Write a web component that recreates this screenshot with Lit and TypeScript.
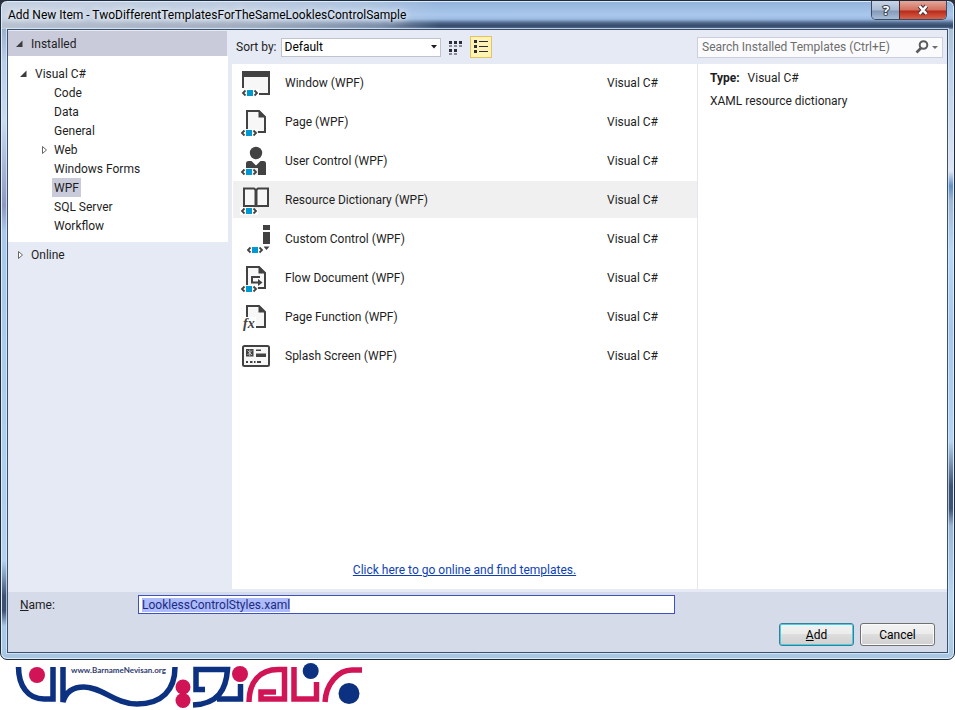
import { LitElement, html, css, svg } from "lit";
import { customElement, state, query } from "lit/decorators.js";
import { classMap } from "lit/directives/class-map.js";

const INK = "#424242";

const badge = (x: number, y: number) => svg`
  <rect x=${x - 1} y=${y - 1} width="18" height="8" fill="#fff" opacity=".9"/>
  <path d="M${x + 3.5} ${y + 0.5}L${x + 1} ${y + 3}l2.5 2.5M${x + 12.5} ${y + 0.5}l2.5 2.5l-2.5 2.5" fill="none" stroke=${INK} stroke-width="1.8"/>
  <rect x=${x + 5} y=${y} width="6" height="6" fill="#0098d0"/>`;

const page = svg`
  <path d="M7 6H19l6 6V27H7z" fill="#f7f7f7" stroke=${INK} stroke-width="2"/>
  <path d="M18.500 5L26 12.500H18.500z" fill=${INK}/>`;

const icons: Record<string, unknown> = {
  window: svg`
    <path d="M3 10H29V28.500H3z" fill="#f7f7f7"/>
    <path d="M2 5H30V29H19V27H28V11H4V22H2z" fill=${INK}/>${badge(2, 24)}`,
  page: svg`${page}${badge(1, 25)}`,
  user: svg`
    <circle cx="16" cy="9" r="6.200" fill=${INK}/>
    <path d="M6 31V19.500Q6 17 8.500 17H11.500L16 21.500L20.500 17H23.500Q26 17 26 19.500V31z" fill=${INK}/>
    ${badge(1, 25)}`,
  book: svg`
    <path d="M4 5.500H14L16 7L18 5.500H28V23H18L16 25L14 23H4z" fill="#f7f7f7" stroke=${INK} stroke-width="2"/>
    <path d="M14.500 6H17.500V24H14.500z" fill=${INK}/>${badge(1, 25)}`,
  custom: svg`
    <path d="M23 3H30V8H23zM23 10H30V22H23zM23.500 24.500H29.500L26.500 28z" fill=${INK}/>${badge(7, 25)}`,
  flow: svg`${page}
    <path d="M20 16H12V21.500H19" fill="none" stroke=${INK} stroke-width="2"/>
    <path d="M18 18L22.500 21.500L18 25z" fill=${INK}/>${badge(1, 25)}`,
  fx: svg`${page}
    <rect x="1" y="17" width="15" height="15" fill="#fff"/>
    <text class="fx" x="3" y="28" fill=${INK}>fx</text>`,
  splash: svg`
    <rect x="3" y="7" width="26" height="20" rx="1.500" fill="#f7f7f7" stroke=${INK} stroke-width="2"/>
    <path d="M6 10H13.500V17.500H6zM16 10.500H21V12H16zM16 14.500H26V18H16zM6 22H8V24H6zM10 22H12.500V24H10zM14 22H15.500V24H14zM17 22H21V24H17z" fill=${INK}/>
    <path d="M7.500 11.500L12 16M12 11.500L7.500 16M9.800 10.500V17" stroke="#ddd" stroke-width=".8"/>`,
};

const templates = [
  ["window", "Window (WPF)"],
  ["page", "Page (WPF)"],
  ["user", "User Control (WPF)"],
  ["book", "Resource Dictionary (WPF)"],
  ["custom", "Custom Control (WPF)"],
  ["flow", "Flow Document (WPF)"],
  ["fx", "Page Function (WPF)"],
  ["splash", "Splash Screen (WPF)"],
];

const categories = ["Code", "Data", "General", "Web", "Windows Forms", "WPF", "SQL Server", "Workflow"];

const opened = html`<svg class="arrow" viewBox="0 0 8 8" aria-hidden="true"><path d="M6.500 .5V7H0z" fill="#3c3c3c"/></svg>`;
const closed = html`<svg class="arrow" viewBox="0 0 8 8" aria-hidden="true"><path d="M2.500 .5V7.500L6.500 4z" fill="#fff" stroke="#666"/></svg>`;

@customElement("brand-logo")
class BrandLogo extends LitElement {
  static styles = css`
    :host { display: block; padding: 0 14px; background: #fff; }
    svg { display: block; width: 350px; height: 50px; }
    text { font: bold 8px Lato, sans-serif; fill: #303b70; }
    .line { fill: none; stroke-width: 5.500px; }
    .navy { stroke: #0b3180; }
    .red { stroke: #d01455; }
    .navy-dot { fill: #0b3180; }
    .red-dot { fill: #d01455; }
  `;
  render() {
    return html`<svg viewBox="14 660 350 50">
      <g class="line navy">
        <path d="M18.500 667C18.500 686 28 699 44 699H53V667"/>
        <path d="M63 667V702C66 691 74 687 84 687C102 687 115 704 137 704C162 704 175 690 175 667"/>
        <path d="M205 689.500H196V669.500H227.500C226 690 218 704 193 705"/>
        <path d="M217 699H240.500V684"/>
      </g>
      <g class="line red">
        <path d="M249 702C249 682 260 669.500 278 669.500H284.500V699H261V692H276"/>
        <path d="M294 667V699H316.500V682"/>
        <path d="M325 702C326 684 338 670 352 670H362"/>
      </g>
      <g class="red-dot">
        <circle cx="37" cy="675" r="8"/><circle cx="183" cy="687" r="7.500"/>
        <circle cx="183" cy="700.500" r="7.500"/><circle cx="240" cy="674" r="8"/>
      </g>
      <g class="navy-dot"><circle cx="310.700" cy="671" r="8"/><circle cx="349" cy="693.500" r="10.500"/></g>
      <text x="71" y="673">www.BarnameNevisan.org</text>
    </svg>`;
  }
}

@customElement("app-root")
class AppRoot extends LitElement {
  @state() category = "WPF";
  @state() template = "Resource Dictionary (WPF)";
  @query("#name") nameBox!: HTMLInputElement;

  static styles = css`
    :host {
      display: flex; flex-direction: column; min-height: 100vh;
      background: linear-gradient(#2b2f3c 0 20px, #fff 20px);
      font: 12px/16px Roboto, sans-serif; color: #1e1e1e;
    }
    * { box-sizing: border-box; }
    button, input, select { font: inherit; color: inherit; margin: 0; padding: 0; }
    svg { display: block; }
    ul { list-style: none; margin: 0; padding: 0; }
    .dialog {
      flex: 1; display: flex; flex-direction: column; padding: 0 6px 6px;
      border: 1px solid #1f2a3a; border-radius: 7px;
      box-shadow: inset 0 0 0 1px #dcecfb;
      background:
        linear-gradient(90deg, rgba(205, 213, 225, .85), rgba(205, 213, 225, .7) 240px, rgba(190, 205, 225, .5) 380px, transparent 440px) top / 100% 28px no-repeat,
        linear-gradient(#93b2da, #a9c7ec 14px, #9dbbe2 18px, #4c6486 22px, #33496a 25px, #52688a 27px, #8797ad 28px) top / 100% 28px no-repeat,
        linear-gradient(#7f96b5, #b9cfe8 60px, #c8dcf0 120px, #8f98c0 205px, #a9c8ea 230px, #b4d2ef 560px, #3e5274 595px, #3e5274 610px, #a9c8ea 625px, #a9c6e0) left / 50% 100% no-repeat,
        linear-gradient(#9fb1c4, #b9cfe8 60px, #e0e4f2 170px, #5f8fc4 185px, #a0b8d4 200px, #b8d8f8 250px, #a6c6ec 330px, #b4d4f4 440px, #3e5274 485px, #3e5274 508px, #9ab6d6 525px, #b8d8f4 600px, #a9c6e0);
    }
    .titlebar { display: flex; justify-content: space-between; height: 28px; }
    h1 { margin: 0; padding: 6px 1px; font: inherit; color: #000; text-shadow: 0 0 6px #fff, 0 0 10px #e8eef6; }
    .caption {
      display: flex; height: 19px; margin-right: 1px;
      border: 1px solid #3c4a60; border-top: 0; border-radius: 0 0 5px 5px;
    }
    .caption button { display: grid; place-items: center; border: 0; }
    .caption .help { width: 27px; border-radius: 0 0 0 4px; background: linear-gradient(#c8d5e6, #a9bbd2 9px, #8399b8 10px, #a8bdd6); }
    .caption .close { width: 47px; border-left: 1px solid #4a2a2a; border-radius: 0 0 4px 0; background: linear-gradient(#e5a79b, #d2705e 9px, #b9291a 10px, #d8624a); }
    .glyph { fill: #fff; stroke: #3c4452; stroke-width: 2px; paint-order: stroke; font: bold 13px/16px "Open Sans", sans-serif; }
    .content {
      flex: 1; display: flex; flex-direction: column;
      border: 1px solid #39506e; background: #e6eaf5;
      box-shadow: 0 0 0 1px rgba(225, 238, 250, .7);
    }
    .body { flex: 1; display: grid; grid-template: 34px 1fr / 224px 1fr 250px; padding-bottom: 3px; }
    .sidebar { grid-row: 1 / 3; padding: 1px 4px 0 0; }
    .group { display: flex; align-items: center; gap: 7px; padding: 0 8px; height: 25px; }
    .group.installed { background: #cacbda; margin-right: 1px; }
    .arrow { width: 8px; height: 8px; flex: none; }
    .tree { background: #fff; height: 186px; padding-top: 8px; }
    .tree li { display: flex; align-items: center; height: 19px; }
    .root { padding-left: 12px; gap: 7px; }
    .leaf { padding-left: 32px; gap: 2px; }
    .slot { width: 10px; flex: none; }
    .leaf button { border: 0; background: none; height: 19px; padding: 0 2px; }
    .leaf button.selected { background: #cacbda; }
    .tools { grid-column: 2 / 4; display: flex; align-items: center; padding: 0 4px; }
    .sort { position: relative; display: flex; align-items: center; gap: 4px; }
    .sort select {
      appearance: none; width: 160px; height: 19px; padding: 0 3px; border: 1px solid #c0c3cf;
      border-radius: 0; background: #fff; color: #000; outline: 0;
    }
    .sort .drop { position: absolute; right: 4px; pointer-events: none; }
    .view { width: 22px; height: 22px; display: grid; place-items: center; border: 1px solid transparent; background: none; }
    .view.small { margin-left: 4px; }
    .view.on { margin-left: 3px; border-color: #e5c365; background: #fff2b5; }
    .search {
      margin-left: auto; width: 246px; height: 21px; display: flex; align-items: center; gap: 3px;
      padding: 0 4px; border: 1px solid #cccedb; background: #fbfbfd;
    }
    .search input { flex: 1; min-width: 0; border: 0; background: none; outline: 0; }
    .search input::placeholder { color: #6d6d6d; opacity: 1; }
    .list { display: flex; flex-direction: column; background: #fff; justify-content: space-between; }
    .items { display: grid; gap: 2px; }
    .item { display: grid; grid-template-columns: 32px 1fr 90px; align-items: center; height: 37px; padding-left: 7px; margin-left: 1px; }
    .item.selected { background: #f0f0f0; }
    .item svg { width: 32px; height: 32px; margin-bottom: 1px; }
    .item .label { padding-left: 13px; }
    .fx { font: italic bold 14px "Liberation Serif", serif; }
    .online { align-self: center; margin-bottom: 11px; color: #0e3fb5; }
    .details { border-left: 1px solid #e4e6ee; background: #fff; padding: 6px 12px; }
    .details p { margin: 0 0 7px; }
    .details strong { margin-right: 5px; }
    .footer { height: 60px; padding: 3px 12px 6px; background: #d6dbe9; display: flex; flex-direction: column; justify-content: space-between; }
    .name { display: grid; grid-template-columns: 118px 1fr 260px; align-items: center; }
    .name input {
      height: 19px; padding: 0 3px; border: 1px solid #3f51c0; background: #fff; outline: 0;
    }
    .name input::selection { background: #adbbfa; color: #1c2c80; }
    .actions { display: flex; justify-content: flex-end; gap: 6px; }
    .actions button {
      width: 75px; height: 23px; border: 1px solid #707070; border-radius: 3px; color: #000;
      background: linear-gradient(#f3f3f3, #ebebeb 50%, #dddddd 50%, #d0d0d0);
      box-shadow: inset 0 0 0 1px #fafafa;
    }
    .actions .primary { border-color: #3c7f95; box-shadow: inset 0 0 0 1px #48cfe8; }
  `;

  firstUpdated() {
    this.nameBox.focus();
    this.nameBox.select();
  }

  render() {
    return html`
      <section class="dialog" role="dialog" aria-labelledby="title">
        <header class="titlebar">
          <h1 id="title">Add New Item - TwoDifferentTemplatesForTheSameLooklesControlSample</h1>
          <div class="caption">
            <button class="help" aria-label="Help"><svg width="16" height="18"><text class="glyph" x="5" y="14">?</text></svg></button>
            <button class="close" aria-label="Close"><svg width="14" height="12" viewBox="0 0 14 12">
              <path d="M3.500 2L10.500 10M10.500 2L3.500 10" stroke="#4a3038" stroke-width="4.500"/>
              <path d="M3.500 2L10.500 10M10.500 2L3.500 10" stroke="#fff" stroke-width="2.600"/></svg></button>
          </div>
        </header>
        <div class="content">
          <div class="body">
            <nav class="sidebar">
              <div class="group installed">${opened}Installed</div>
              <ul class="tree">
                <li class="root">${opened}Visual C#</li>
                ${categories.map((c) => html`<li class="leaf"><span class="slot">${c === "Web" ? closed : ""}</span><button
                  class=${classMap({ selected: c === this.category })} @click=${() => (this.category = c)}>${c}</button></li>`)}
              </ul>
              <div class="group">${closed}Online</div>
            </nav>
            <div class="tools">
              <div class="sort">
                <label for="sort">Sort by:</label>
                <select id="sort"><option>Default</option></select>
                <svg class="drop" width="6" height="4" viewBox="0 0 6 4"><path d="M0 0H6L3 3.500z" fill="#1e1e1e"/></svg>
              </div>
              <button class="view small" aria-label="Small icons"><svg width="14" height="15" fill="#2d2d3a">
                <path d="M0 1H3V4H0zM5 1H8V4H5zM10 1H13V4H10zM0 5.500H3V6.500H0zM5 5.500H8V6.500H5zM10 5.500H13V6.500H10zM0 9H3V12H0zM5 9H8V12H5zM0 13.500H3V14.500H0zM5 13.500H8V14.500H5z"/></svg></button>
              <button class="view on" aria-label="Medium icons"><svg width="14" height="14" fill="#2d2d3a">
                <path d="M0 0H3V3H0zM0 5H3V8H0zM0 10H3V13H0zM5 1H14V2H5zM5 6H14V7H5zM5 11H14V12H5z"/></svg></button>
              <div class="search">
                <input aria-label="Search" placeholder="Search Installed Templates (Ctrl+E)">
                <svg width="14" height="14" fill="none" stroke="#5a5a5a"><circle cx="8.500" cy="5" r="3.800" stroke-width="2"/><path d="M6 8L1.500 12.500" stroke-width="2.600"/></svg>
                <svg width="6" height="3" viewBox="0 0 6 3"><path d="M0 0H6L3 3z" fill="#6d6d6d"/></svg>
              </div>
            </div>
            <main class="list">
              <ul class="items" role="listbox">
                ${templates.map(([icon, label]) => html`<li role="option" aria-selected=${label === this.template}
                  class=${classMap({ item: true, selected: label === this.template })} @click=${() => (this.template = label)}>
                  <svg viewBox="0 0 32 32">${icons[icon]}</svg><span class="label">${label}</span><span>Visual C#</span></li>`)}
              </ul>
              <a class="online" href="#">Click here to go online and find templates.</a>
            </main>
            <aside class="details">
              <p><strong>Type:</strong> Visual C#</p>
              <p>XAML resource dictionary</p>
            </aside>
          </div>
          <footer class="footer">
            <div class="name"><label for="name"><u>N</u>ame:</label><input id="name" value="LooklessControlStyles.xaml"></div>
            <div class="actions"><button class="primary"><u>A</u>dd</button><button>Cancel</button></div>
          </footer>
        </div>
      </section>
      <brand-logo></brand-logo>`;
  }
}
